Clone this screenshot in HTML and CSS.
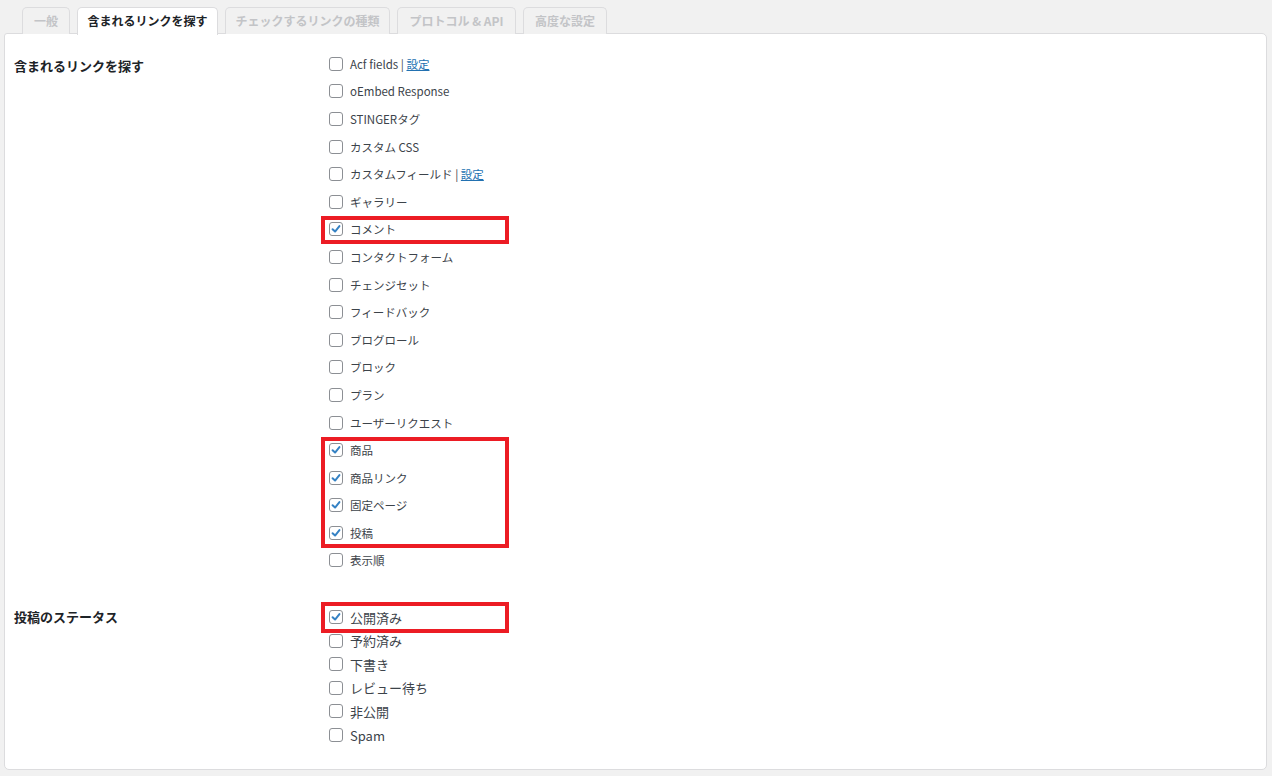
FILE: index.html
```html
<!DOCTYPE html>
<html lang="ja">
<head>
<meta charset="utf-8">
<title>含まれるリンクを探す</title>
<link rel="stylesheet" href="styles.css">
</head>
<body>
<nav class="tabs">
  <span class="tab t1">一般</span>
  <span class="tab t2 active">含まれるリンクを探す</span>
  <span class="tab t3">チェックするリンクの種類</span>
  <span class="tab t4">プロトコル &amp; API</span>
  <span class="tab t5">高度な設定</span>
</nav>
<main class="panel">
  <section class="sec sec1">
    <h3 class="label">含まれるリンクを探す</h3>
    <ul class="list list1">
      <li><span class="cb"></span><span>Acf fields <span class="sep">|</span> <a href="#">設定</a></span></li>
      <li><span class="cb"></span>oEmbed Response</li>
      <li><span class="cb"></span>STINGERタグ</li>
      <li><span class="cb"></span>カスタム CSS</li>
      <li><span class="cb"></span><span>カスタムフィールド <span class="sep">|</span> <a href="#">設定</a></span></li>
      <li><span class="cb"></span>ギャラリー</li>
      <li><span class="cb on"><svg viewBox="0 0 14 14"><path d="M3 7.2 L5.9 10 L11 3.6"/></svg></span>コメント</li>
      <li><span class="cb"></span>コンタクトフォーム</li>
      <li><span class="cb"></span>チェンジセット</li>
      <li><span class="cb"></span>フィードバック</li>
      <li><span class="cb"></span>ブログロール</li>
      <li><span class="cb"></span>ブロック</li>
      <li><span class="cb"></span>プラン</li>
      <li><span class="cb"></span>ユーザーリクエスト</li>
      <li><span class="cb on"><svg viewBox="0 0 14 14"><path d="M3 7.2 L5.9 10 L11 3.6"/></svg></span>商品</li>
      <li><span class="cb on"><svg viewBox="0 0 14 14"><path d="M3 7.2 L5.9 10 L11 3.6"/></svg></span>商品リンク</li>
      <li><span class="cb on"><svg viewBox="0 0 14 14"><path d="M3 7.2 L5.9 10 L11 3.6"/></svg></span>固定ページ</li>
      <li><span class="cb on"><svg viewBox="0 0 14 14"><path d="M3 7.2 L5.9 10 L11 3.6"/></svg></span>投稿</li>
      <li><span class="cb"></span>表示順</li>
    </ul>
  </section>
  <section class="sec sec2">
    <h3 class="label">投稿のステータス</h3>
    <ul class="list list2">
      <li><span class="cb on"><svg viewBox="0 0 14 14"><path d="M3 7.2 L5.9 10 L11 3.6"/></svg></span>公開済み</li>
      <li><span class="cb"></span>予約済み</li>
      <li><span class="cb"></span>下書き</li>
      <li><span class="cb"></span>レビュー待ち</li>
      <li><span class="cb"></span>非公開</li>
      <li><span class="cb"></span>Spam</li>
    </ul>
  </section>
</main>
<div class="mark m1"></div>
<div class="mark m2"></div>
<div class="mark m3"></div>
</body>
</html>
```
FILE: styles.css
```css
* { box-sizing: border-box; }
html, body { margin: 0; padding: 0; }
body {
  background: #f1f1f1;
  font-family: "Noto Sans CJK JP", "Noto Sans", sans-serif;
  color: #3c434a;
  width: 1272px;
  height: 776px;
  overflow: hidden;
  position: relative;
}
.tabs {
  display: flex;
  gap: 7px;
  padding: 7px 0 0 22px;
  height: 34px;
  position: relative;
  z-index: 2;
}
.tab {
  height: 27px;
  border: 1px solid #dcdcde;
  border-bottom: none;
  border-radius: 5px 5px 0 0;
  background: #f1f1f1;
  color: #c3c4c7;
  font-weight: bold;
  font-size: 12px;
  line-height: 25px;
  text-align: center;
  white-space: nowrap;
}
.t1 { width: 48px; }
.t2 { width: 141px; }
.t3 { width: 165px; }
.t4 { width: 119px; }
.t5 { width: 84px; }
.tab.active {
  background: #fff;
  color: #1d2327;
  height: 28px;
}
.panel {
  margin: -1px 5px 0 4px;
  height: 737px;
  background: #fff;
  border: 1px solid #dcdcde;
  border-radius: 3px 5px 5px 5px;
  padding: 16px 0 0 9px;
}
.sec {
  display: grid;
  grid-template-columns: 315px 1fr;
}
.sec2 { margin-top: 31px; }
.label {
  margin: 0;
  font-size: 13px;
  font-weight: bold;
  color: #1d2327;
  line-height: 20px;
}
.sec1 .label { padding-top: 6px; }
.sec2 .label { padding-top: 2px; }
.list {
  list-style: none;
  margin: 0;
  padding: 0;
}
.list li {
  display: flex;
  align-items: center;
  white-space: nowrap;
}
.list1 li { height: 27.6px; font-size: 11.5px; }
.list2 li { height: 23.6px; font-size: 13px; }
.cb {
  width: 14px;
  height: 14px;
  border: 1px solid #8c8f94;
  border-radius: 3px;
  background: #fff;
  margin-right: 7px;
  flex: none;
  display: flex;
  align-items: center;
  justify-content: center;
}
.cb svg { width: 12px; height: 12px; }
.cb svg path {
  fill: none;
  stroke: #3582c4;
  stroke-width: 2.3;
  stroke-linecap: round;
  stroke-linejoin: round;
}
.sep { color: #3c434a; }
a { color: #2271b1; text-decoration: underline; }
.mark {
  position: absolute;
  border: 4px solid #ec1c24;
  left: 321px;
  width: 188px;
}
.m1 { top: 216px; height: 28px; }
.m2 { top: 437px; height: 111px; }
.m3 { top: 602px; height: 31px; }
```
